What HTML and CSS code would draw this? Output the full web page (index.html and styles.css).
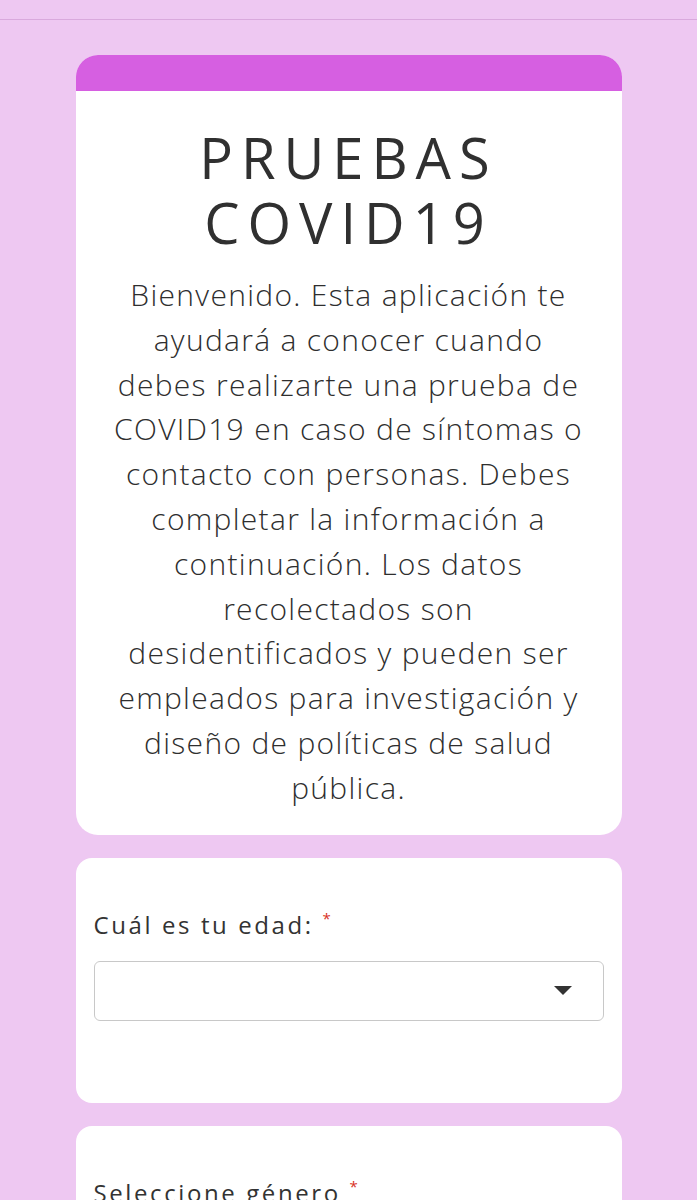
FILE: index.html
```html
<!DOCTYPE html>
<html lang="es">
<head>
<meta charset="utf-8">
<title>Pruebas COVID19</title>
<link rel="stylesheet" href="styles.css">
</head>
<body>
<div class="topbar"></div>
<div class="page">
	<div class="card intro">
		<div class="band"></div>
		<div class="intro_body">
			<h1 class="title">PRUEBAS<br>COVID19</h1>
			<p class="welcome">Bienvenido. Esta aplicación te<br>ayudará a conocer cuando<br>debes realizarte una prueba de<br>COVID19 en caso de síntomas o<br>contacto con personas. Debes<br>completar la información a<br>continuación. Los datos<br>recolectados son<br>desidentificados y pueden ser<br>empleados para investigación y<br>diseño de políticas de salud<br>pública.</p>
		</div>
	</div>
	<div class="card question">
		<label class="q_label">Cuál es tu edad: <span class="req">*</span></label>
		<div class="select">
			<span class="arrow"></span>
		</div>
	</div>
	<div class="card question">
		<label class="q_label">Seleccione género <span class="req">*</span></label>
		<div class="select">
			<span class="arrow"></span>
		</div>
	</div>
</div>
</body>
</html>
```

FILE: styles.css
```css
body {
	margin: 0;
	background: #eec8f2;
	color: #333333;
	font-family: "Open Sans", Lato, sans-serif;
}
.topbar {
	height: 19px;
	border-bottom: 1px solid #d9a9dd;
}
.page {
	width: 546px;
	margin: 35px auto 0 auto;
	display: flex;
	flex-direction: column;
	gap: 23px;
}
.card {
	background: white;
	border-radius: 22px;
	overflow: hidden;
}
.band {
	height: 36px;
	background: #d65fe1;
}
.intro_body {
	padding: 34px 10px 24px 10px;
	text-align: center;
}
.title {
	margin: 0 0 18px 0;
	font-weight: 400;
	font-size: 56px;
	line-height: 65px;
	letter-spacing: 8px;
	color: #303030;
}
.welcome {
	margin: 0;
	font-size: 30px;
	line-height: 44.8px;
	letter-spacing: 1.3px;
	font-weight: 300;
	color: #2e2e2e;
}
.question {
	border-radius: 16px;
	padding: 50px 18px 0 18px;
	height: 195px;
}
.q_label {
	display: block;
	font-size: 24px;
	font-weight: 400;
	letter-spacing: 2.6px;
	color: #333333;
	margin-bottom: 20px;
}
.req {
	color: #d93025;
	font-size: 15px;
	vertical-align: top;
	line-height: 20px;
}
.select {
	height: 58px;
	border: 1px solid #c8c8c8;
	border-radius: 6px;
	position: relative;
}
.arrow {
	position: absolute;
	right: 31px;
	top: 24px;
	border-left: 9px solid transparent;
	border-right: 9px solid transparent;
	border-top: 9px solid #333333;
}
```
